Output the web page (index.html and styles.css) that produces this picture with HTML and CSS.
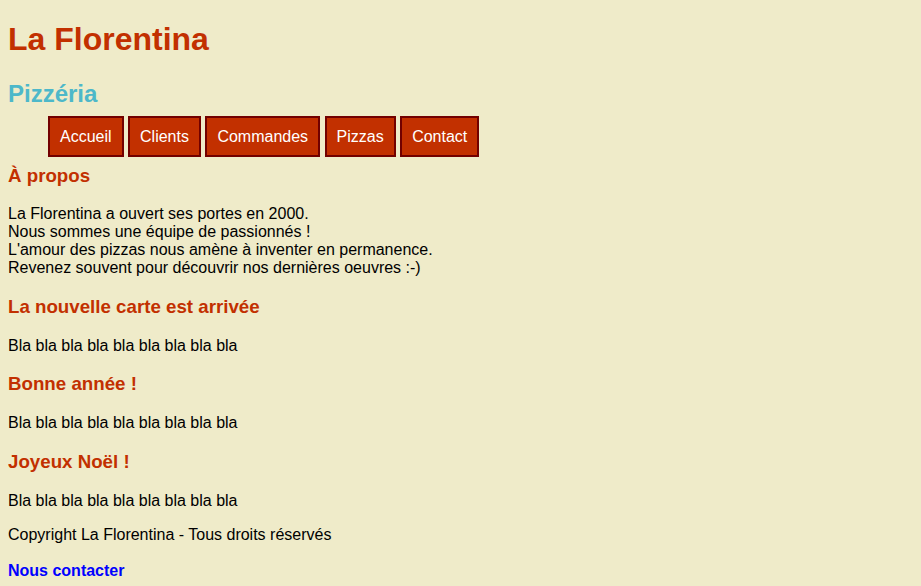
FILE: index.html
```html
<!DOCTYPE html>
<html lang="fr">
<head>
<meta charset="utf-8">
<title>La Florentina</title>
<link rel="stylesheet" href="styles.css">
</head>
<body>
<header>
<h1 class="title">La Florentina</h1>
<h2 class="subtitle">Pizzéria</h2>
<nav>
<ul class="menu">
<li><a href="#">Accueil</a></li>
<li><a href="#">Clients</a></li>
<li><a href="#">Commandes</a></li>
<li><a href="#">Pizzas</a></li>
<li><a href="#">Contact</a></li>
</ul>
</nav>
</header>
<main>
<section>
<h3 class="heading">À propos</h3>
<p>La Florentina a ouvert ses portes en 2000.<br>Nous sommes une équipe de passionnés !<br>L'amour des pizzas nous amène à inventer en permanence.<br>Revenez souvent pour découvrir nos dernières oeuvres :-)</p>
</section>
<article>
<h3 class="heading">La nouvelle carte est arrivée</h3>
<p>Bla bla bla bla bla bla bla bla bla</p>
</article>
<article>
<h3 class="heading">Bonne année !</h3>
<p>Bla bla bla bla bla bla bla bla bla</p>
</article>
<article>
<h3 class="heading">Joyeux Noël !</h3>
<p>Bla bla bla bla bla bla bla bla bla</p>
</article>
</main>
<footer>
<p>Copyright La Florentina - Tous droits réservés</p>
<p class="contact"><a href="#">Nous contacter</a></p>
</footer>
</body>
</html>
```
FILE: styles.css
```css
body {
  margin: 0 8px 8px;
  background: #efebc9;
  font-family: "Liberation Sans", Arial, sans-serif;
  color: #000;
}
.title {
  color: #c23000;
}
.subtitle {
  color: #4db8c9;
}
.heading {
  color: #c23000;
}
.menu li {
  display: inline;
}
.menu a {
  background: #c23000;
  color: #fff;
  text-decoration: none;
  padding: 10px;
  border: 2px solid #720000;
}
.contact {
  margin-top: 18px;
}
.contact a {
  color: #0000ff;
  font-weight: bold;
  text-decoration: none;
}
```
